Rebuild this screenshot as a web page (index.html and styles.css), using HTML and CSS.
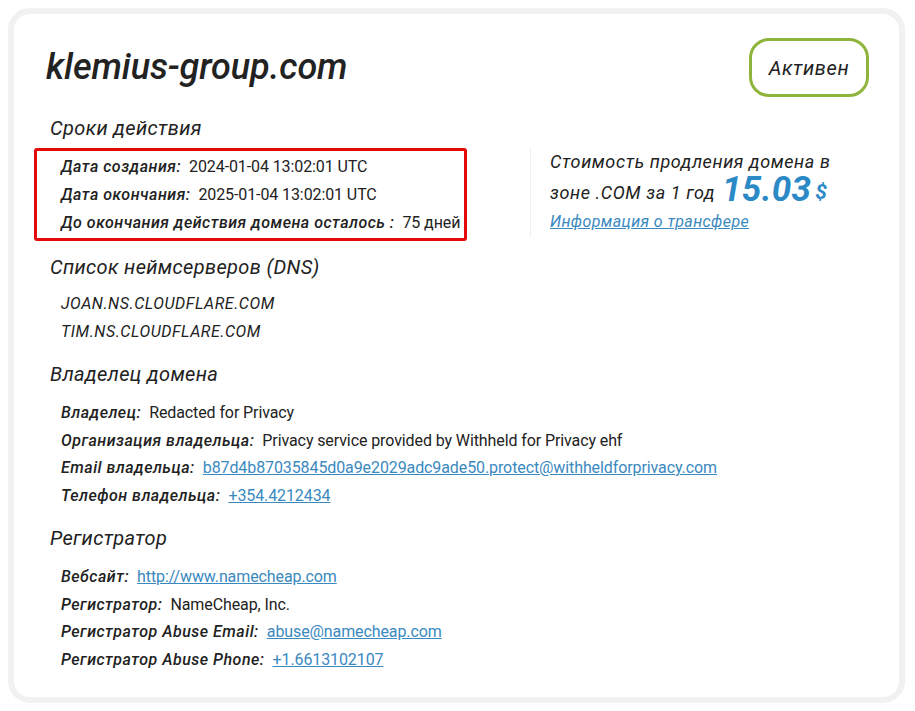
FILE: index.html
```html
<!DOCTYPE html>
<html lang="ru">
<head>
<meta charset="utf-8">
<title>klemius-group.com</title>
<link rel="stylesheet" href="styles.css">
</head>
<body>
<div class="card">
  <div class="top">
    <h1 class="domain">klemius-group.com</h1>
    <div class="badge">Активен</div>
  </div>
  <h2 class="sec first">Сроки действия</h2>
  <div class="dates-row">
    <div class="redbox">
      <div class="row"><span class="lbl">Дата создания:</span><span class="val">2024-01-04 13:02:01 UTC</span></div>
      <div class="row"><span class="lbl">Дата окончания:</span><span class="val">2025-01-04 13:02:01 UTC</span></div>
      <div class="row"><span class="lbl">До окончания действия домена осталось :</span><span class="val">75 дней</span></div>
    </div>
    <div class="price">
      <div class="ptext">Стоимость продления домена в</div>
      <div class="ptext">зоне .COM за 1 год <span class="num">15.03</span><span class="cur">$</span></div>
      <a class="plink" href="#">Информация о трансфере</a>
    </div>
  </div>

  <h2 class="sec dns">Список неймсерверов (DNS)</h2>
  <div class="list">
    <div class="row ns">JOAN.NS.CLOUDFLARE.COM</div>
    <div class="row ns">TIM.NS.CLOUDFLARE.COM</div>
  </div>

  <h2 class="sec">Владелец домена</h2>
  <div class="list wide">
    <div class="row"><span class="lbl">Владелец:</span><span class="val">Redacted for Privacy</span></div>
    <div class="row"><span class="lbl">Организация владельца:</span><span class="val">Privacy service provided by Withheld for Privacy ehf</span></div>
    <div class="row"><span class="lbl">Email владельца:</span><a class="val link" href="#">b87d4b87035845d0a9e2029adc9ade50.protect@withheldforprivacy.com</a></div>
    <div class="row"><span class="lbl">Телефон владельца:</span><a class="val link" href="#">+354.4212434</a></div>
  </div>

  <h2 class="sec">Регистратор</h2>
  <div class="list last">
    <div class="row"><span class="lbl">Вебсайт:</span><a class="val link" href="#">http://www.namecheap.com</a></div>
    <div class="row"><span class="lbl">Регистратор:</span><span class="val">NameCheap, Inc.</span></div>
    <div class="row"><span class="lbl">Регистратор Abuse Email:</span><a class="val link" href="#">abuse@namecheap.com</a></div>
    <div class="row"><span class="lbl">Регистратор Abuse Phone:</span><a class="val link" href="#">+1.6613102107</a></div>
  </div>
</div>
</body>
</html>
```
FILE: styles.css
```css
* { box-sizing: border-box; }
html, body { margin: 0; padding: 0; background: #ffffff; }
body {
  font-family: "Roboto", "Noto Sans", sans-serif;
  color: #222222;
}
.card {
  margin: 8px 0 0 8px;
  width: 897px;
  height: 695px;
  border: 6px solid #f1f1f1;
  border-radius: 22px;
  background: #ffffff;
  padding: 24px 32px 0 32px;
}
.top {
  display: flex;
  justify-content: space-between;
  align-items: center;
  height: 59px;
}
.domain {
  margin: 0;
  font-style: italic;
  font-weight: 500;
  font-size: 36px;
  line-height: 59px;
  color: #222;
  letter-spacing: -0.1px;
}
.badge {
  width: 120px;
  height: 59px;
  margin-right: -2px;
  border: 3px solid #8fb43b;
  border-radius: 20px;
  font-style: italic;
  font-size: 20px;
  letter-spacing: 0.6px;
  display: flex;
  align-items: center;
  justify-content: center;
  color: #222;
}
.sec {
  margin: 15px 0 0 4px;
  font-weight: 400;
  font-style: italic;
  font-size: 20px;
  letter-spacing: 0.35px;
  line-height: 28px;
  color: #222;
}
.sec.first { margin-top: 17px; }
.sec.dns { margin-top: 12px; }
.dates-row {
  display: flex;
  align-items: flex-start;
  margin-top: 6px;
}
.redbox {
  width: 433px;
  margin-left: -12px;
  border: 3px solid #e50a0a;
  border-radius: 3px;
  padding: 2px 6px 1px 24px;
}
.row {
  font-size: 16px;
  line-height: 28px;
  white-space: nowrap;
}
.lbl {
  font-style: italic;
  font-weight: 500;
  letter-spacing: 0.5px;
  margin-right: 8px;
}
.val { color: #222; letter-spacing: -0.1px; }
.link { color: #3a89bf; text-decoration: underline; }
.price {
  margin-left: 63px;
  border-left: 1px solid #efefef;
  padding-left: 19px;
  height: 89px;
}
.ptext {
  font-style: italic;
  font-size: 18px;
  letter-spacing: 0.6px;
  line-height: 32px;
  color: #222;
}
.ptext:first-child { line-height: 28px; }
.num {
  font-size: 35px;
  font-weight: 700;
  letter-spacing: 0.3px;
  color: #2b8ac6;
  margin-left: 2px;
  vertical-align: -2px;
  line-height: 28px;
}
.cur {
  font-size: 21px;
  font-weight: 700;
  color: #2b8ac6;
  margin-left: 4px;
}
.plink {
  display: block;
  font-style: italic;
  font-size: 16px;
  letter-spacing: 0.4px;
  line-height: 26px;
  color: #3a89bf;
  text-decoration: underline;
}
.list {
  margin-top: 9px;
  padding-left: 15px;
}
.list.wide { margin-top: 11px; }
.list.last { margin-top: 11px; }
.list .row { line-height: 27.5px; }
.ns { font-style: italic; font-weight: 400; letter-spacing: 0.55px; }
```
